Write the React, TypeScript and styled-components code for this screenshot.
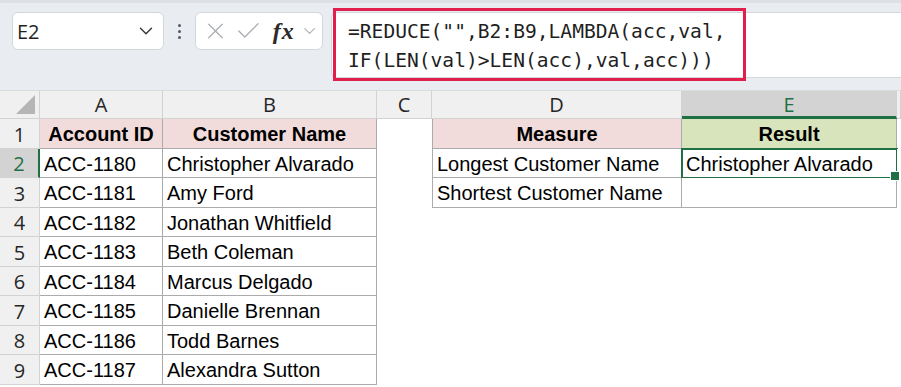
import React from 'react';
import styled, { createGlobalStyle, css } from 'styled-components';
import { ChevronDown, X, Check } from 'lucide-react';

const GlobalStyle = createGlobalStyle`
  html, body {
    margin: 0;
    padding: 0;
    background: #ffffff;
    overflow: hidden;
  }
  * {
    box-sizing: border-box;
  }
`;

const GREEN = '#1f7145';
const TABLE_LINE = '#ababab';
const HEAD_LINE = '#d2d2d2';

const Page = styled.div`
  width: 901px;
  height: 387px;
  display: flex;
  flex-direction: column;
  font-family: 'Liberation Sans', Arial, sans-serif;
  background: #ffffff;
`;

// formula bar area
const Toolbar = styled.div`
  height: 90px;
  flex: none;
  display: flex;
  align-items: flex-start;
  padding: 9px 0 0 12px;
  background: #e9edf1;
  border-top: 3px solid #dde1e5;
`;

const NameBox = styled.div`
  width: 152px;
  height: 38px;
  display: flex;
  align-items: center;
  justify-content: space-between;
  padding: 0 6px 0 4px;
  background: #ffffff;
  border: 1px solid #d3d8dd;
  border-radius: 6px;
  font-family: 'Open Sans', 'Liberation Sans', sans-serif;
  font-size: 20px;
  color: #1f1f1f;
`;

const Grip = styled.div`
  width: 31px;
  height: 38px;
  display: flex;
  flex-direction: column;
  align-items: center;
  justify-content: center;
  gap: 3px;
  span {
    width: 3px;
    height: 3px;
    border-radius: 50%;
    background: #555a60;
  }
`;

const FxBox = styled.div`
  width: 128px;
  height: 38px;
  display: flex;
  align-items: center;
  padding: 0 3px 0 6px;
  gap: 5px;
  background: #ffffff;
  border: 1px solid #d3d8dd;
  border-radius: 6px;
  color: #a9adb1;
`;

const Fx = styled.span`
  font-family: 'Liberation Serif', 'Times New Roman', serif;
  font-style: italic;
  font-weight: bold;
  font-size: 24px;
  color: #2b2b2b;
  margin-left: 5px;
  letter-spacing: 1px;
`;

const FormulaBar = styled.div`
  flex: 1;
  height: 66px;
  margin-left: 8px;
  background: #ffffff;
  border-top: 1px solid #d3d8dd;
  border-bottom: 1px solid #d3d8dd;
  border-left: 1px solid #d3d8dd;
  border-radius: 6px 0 0 6px;
  display: flex;
`;

const Highlight = styled.div`
  width: 413px;
  height: 73px;
  margin: -5px 0 0 1px;
  border: 3px solid #e01f4c;
  padding: 6px 0 0 12px;
  font-family: 'DejaVu Sans Mono', 'Liberation Mono', monospace;
  font-size: 19.6px;
  line-height: 29px;
  color: #1f1f1f;
  white-space: pre;
`;

// sheet grid
const Sheet = styled.div`
  display: grid;
  grid-template-columns: 40px 123px 214px 55px 250px 215px 4px;
  grid-template-rows: 29px repeat(9, 29.5px);
`;

const ColHead = styled.div<{ $active?: boolean }>`
  display: flex;
  align-items: center;
  justify-content: center;
  background: ${(p) => (p.$active ? '#d3d3d3' : '#f0f0f0')};
  border-right: 1px solid ${HEAD_LINE};
  border-top: 1px solid #dcdcdc;
  border-bottom: ${(p) => (p.$active ? `3px solid ${GREEN}` : `1px solid ${HEAD_LINE}`)};
  font-family: 'Open Sans', 'Liberation Sans', sans-serif;
  font-size: 20px;
  color: ${(p) => (p.$active ? GREEN : '#262626')};
  padding-top: ${(p) => (p.$active ? '2px' : '0')};
`;

const Corner = styled(ColHead)`
  position: relative;
  &::after {
    content: '';
    position: absolute;
    right: 4px;
    bottom: 4px;
    width: 0;
    height: 0;
    border-left: 19px solid transparent;
    border-bottom: 19px solid #b5b5b5;
  }
`;

const RowHead = styled.div<{ $active?: boolean }>`
  display: flex;
  align-items: center;
  justify-content: center;
  padding-top: 2px;
  background: ${(p) => (p.$active ? '#d3d3d3' : '#f0f0f0')};
  border-bottom: 1px solid ${HEAD_LINE};
  border-right: ${(p) => (p.$active ? `2px solid ${GREEN}` : `1px solid ${HEAD_LINE}`)};
  font-family: 'Open Sans', 'Liberation Sans', sans-serif;
  font-size: 20px;
  color: ${(p) => (p.$active ? GREEN : '#262626')};
`;

type Fill = 'none' | 'pink' | 'green';

const Cell = styled.div<{ $boxed?: boolean; $leftEdge?: boolean; $fill?: Fill; $head?: boolean; $selected?: boolean }>`
  position: relative;
  display: flex;
  align-items: center;
  padding: 3px 4px 0 4px;
  font-size: 20px;
  color: #000000;
  white-space: nowrap;
  overflow: visible;
  background: ${(p) => (p.$fill === 'pink' ? '#f2dcdb' : p.$fill === 'green' ? '#d8e4bc' : '#ffffff')};
  ${(p) =>
    p.$boxed &&
    css`
      border-right: 1px solid ${TABLE_LINE};
      border-bottom: 1px solid ${TABLE_LINE};
    `}
  ${(p) =>
    p.$leftEdge &&
    css`
      border-left: 1px solid ${TABLE_LINE};
    `}
  ${(p) =>
    p.$head &&
    css`
      justify-content: center;
      font-weight: bold;
    `}
  ${(p) =>
    p.$selected &&
    css`
      outline: 2px solid ${GREEN};
      outline-offset: -1px;
      &::after {
        content: '';
        position: absolute;
        right: -4px;
        bottom: -4px;
        width: 8px;
        height: 8px;
        background: ${GREEN};
        border: 1px solid #ffffff;
        z-index: 2;
      }
    `}
`;

const customers: [string, string][] = [
  ['ACC-1180', 'Christopher Alvarado'],
  ['ACC-1181', 'Amy Ford'],
  ['ACC-1182', 'Jonathan Whitfield'],
  ['ACC-1183', 'Beth Coleman'],
  ['ACC-1184', 'Marcus Delgado'],
  ['ACC-1185', 'Danielle Brennan'],
  ['ACC-1186', 'Todd Barnes'],
  ['ACC-1187', 'Alexandra Sutton'],
];

const summary: [string, string][] = [
  ['Longest Customer Name', 'Christopher Alvarado'],
  ['Shortest Customer Name', ''],
];

export default function App() {
  const cols = ['A', 'B', 'C', 'D', 'E'];

  const rows = [];
  for (let r = 1; r <= 9; r++) {
    const cust = r === 1 ? ['Account ID', 'Customer Name'] : customers[r - 2];
    const sum = r === 1 ? ['Measure', 'Result'] : summary[r - 2];
    const head = r === 1;
    rows.push(
      <React.Fragment key={r}>
        <RowHead $active={r === 2}>{r}</RowHead>
        <Cell $boxed $fill={head ? 'pink' : 'none'} $head={head}>
          {cust[0]}
        </Cell>
        <Cell $boxed $fill={head ? 'pink' : 'none'} $head={head}>
          {cust[1]}
        </Cell>
        <Cell />
        {sum ? (
          <>
            <Cell $boxed $leftEdge $fill={head ? 'pink' : 'none'} $head={head}>
              {sum[0]}
            </Cell>
            <Cell $boxed $fill={head ? 'green' : 'none'} $head={head} $selected={r === 2}>
              {sum[1]}
            </Cell>
          </>
        ) : (
          <>
            <Cell />
            <Cell />
          </>
        )}
        <Cell />
      </React.Fragment>
    );
  }

  return (
    <Page>
      <GlobalStyle />
      <Toolbar>
        <NameBox>
          <span>E2</span>
          <ChevronDown size={22} strokeWidth={1.6} color="#3a3a3a" />
        </NameBox>
        <Grip>
          <span />
          <span />
          <span />
        </Grip>
        <FxBox>
          <X size={28} strokeWidth={1.1} />
          <Check size={30} strokeWidth={1.1} />
          <Fx>fx</Fx>
          <ChevronDown size={20} strokeWidth={1.3} />
        </FxBox>
        <FormulaBar>
          <Highlight>
            {'=REDUCE("",B2:B9,LAMBDA(acc,val,\nIF(LEN(val)>LEN(acc),val,acc)))'}
          </Highlight>
        </FormulaBar>
      </Toolbar>
      <Sheet>
        <Corner />
        {cols.map((c) => (
          <ColHead key={c} $active={c === 'E'}>
            {c}
          </ColHead>
        ))}
        <ColHead />
        {rows}
      </Sheet>
    </Page>
  );
}
